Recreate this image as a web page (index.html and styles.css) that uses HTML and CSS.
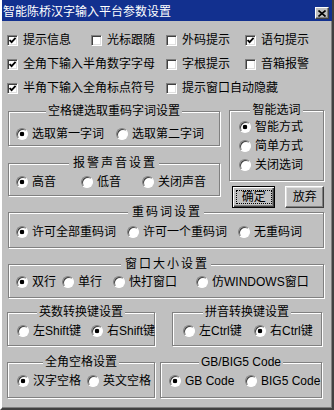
FILE: index.html
```html
<!DOCTYPE html>
<html lang="zh-CN">
<head>
<meta charset="utf-8">
<title>智能陈桥汉字输入平台参数设置</title>
<link rel="stylesheet" href="styles.css">
</head>
<body>
<div class="window">
  <div class="titlebar">
    <span class="title">智能陈桥汉字输入平台参数设置</span>
    <span class="close"><svg width="8" height="7" viewBox="0 0 8 7"><path d="M0.5 0.5 L7.5 6.5 M7.5 0.5 L0.5 6.5" stroke="#000" stroke-width="1.6" fill="none"/></svg></span>
  </div>
  <div class="body">
    <div class="checks">
      <label class="chk"><span class="box"><svg width="7" height="7" viewBox="0 0 7 7"><polyline points="0.6,3 2.6,5.2 6.6,0.8" stroke="#000" stroke-width="1.8" fill="none"/></svg></span>提示信息</label>
      <label class="chk"><span class="box"></span>光标跟随</label>
      <label class="chk"><span class="box"></span>外码提示</label>
      <label class="chk"><span class="box"><svg width="7" height="7" viewBox="0 0 7 7"><polyline points="0.6,3 2.6,5.2 6.6,0.8" stroke="#000" stroke-width="1.8" fill="none"/></svg></span>语句提示</label>
      <label class="chk span2"><span class="box"><svg width="7" height="7" viewBox="0 0 7 7"><polyline points="0.6,3 2.6,5.2 6.6,0.8" stroke="#000" stroke-width="1.8" fill="none"/></svg></span>全角下输入半角数字字母</label>
      <label class="chk"><span class="box"></span>字根提示</label>
      <label class="chk"><span class="box"></span>音箱报警</label>
      <label class="chk span2"><span class="box"><svg width="7" height="7" viewBox="0 0 7 7"><polyline points="0.6,3 2.6,5.2 6.6,0.8" stroke="#000" stroke-width="1.8" fill="none"/></svg></span>半角下输入全角标点符号</label>
      <label class="chk span2"><span class="box"></span>提示窗口自动隐藏</label>
    </div>

    <div class="middle">
      <div class="col-left">
        <div class="group g1">
          <div class="legend">空格键选取重码字词设置</div>
          <div class="opts">
            <label class="rad"><span class="dot on"></span>选取第一字词</label>
            <label class="rad"><span class="dot"></span>选取第二字词</label>
          </div>
        </div>
        <div class="group g2">
          <div class="legend spaced">报警声音设置</div>
          <div class="opts">
            <label class="rad"><span class="dot on"></span>高音</label>
            <label class="rad"><span class="dot"></span>低音</label>
            <label class="rad"><span class="dot"></span>关闭声音</label>
          </div>
        </div>
      </div>
      <div class="col-right">
        <div class="group g3">
          <div class="legend">智能选词</div>
          <div class="opts-col">
            <label class="rad"><span class="dot on"></span>智能方式</label>
            <label class="rad"><span class="dot"></span>简单方式</label>
            <label class="rad"><span class="dot"></span>关闭选词</label>
          </div>
        </div>
        <div class="buttons">
          <button class="btn btn-ok"><span class="focus">确定</span></button>
          <button class="btn btn-cancel">放弃</button>
        </div>
      </div>
    </div>

    <div class="group g4">
      <div class="legend spaced">重码词设置</div>
      <div class="opts">
        <label class="rad"><span class="dot on"></span>许可全部重码词</label>
        <label class="rad"><span class="dot"></span>许可一个重码词</label>
        <label class="rad"><span class="dot"></span>无重码词</label>
      </div>
    </div>

    <div class="group g5">
      <div class="legend spaced">窗口大小设置</div>
      <div class="opts">
        <label class="rad"><span class="dot on"></span>双行</label>
        <label class="rad"><span class="dot"></span>单行</label>
        <label class="rad"><span class="dot"></span>快打窗口</label>
        <label class="rad"><span class="dot"></span>仿WINDOWS窗口</label>
      </div>
    </div>

    <div class="pair pair1">
      <div class="group g6">
        <div class="legend">英数转换键设置</div>
        <div class="opts">
          <label class="rad"><span class="dot"></span>左Shift键</label>
          <label class="rad"><span class="dot on"></span>右Shift键</label>
        </div>
      </div>
      <div class="group g7">
        <div class="legend">拼音转换键设置</div>
        <div class="opts">
          <label class="rad"><span class="dot"></span>左Ctrl键</label>
          <label class="rad"><span class="dot on"></span>右Ctrl键</label>
        </div>
      </div>
    </div>

    <div class="pair pair2">
      <div class="group g8">
        <div class="legend">全角空格设置</div>
        <div class="opts">
          <label class="rad"><span class="dot on"></span>汉字空格</label>
          <label class="rad"><span class="dot"></span>英文空格</label>
        </div>
      </div>
      <div class="group g9">
        <div class="legend">GB/BIG5 Code</div>
        <div class="opts">
          <label class="rad"><span class="dot on"></span>GB Code</label>
          <label class="rad"><span class="dot"></span>BIG5 Code</label>
        </div>
      </div>
    </div>
  </div>
</div>
</body>
</html>
```

FILE: styles.css
```css
html, body {
  margin: 0;
  padding: 0;
  background: #c0c0c0;
}

body {
  font-family: "Liberation Sans", "Noto Sans CJK SC", sans-serif;
  font-size: 12px;
  line-height: 14px;
  color: #000;
}

.window {
  width: 334px;
  height: 410px;
  box-sizing: border-box;
  border-style: solid;
  border-width: 0 2px 2px 2px;
  border-color: #dfdfdf #404040 #404040 #ffffff;
  box-shadow: inset -1px -1px 0 #808080;
  background: #c0c0c0;
  overflow: hidden;
}

/* title bar */
.titlebar {
  height: 21px;
  box-sizing: border-box;
  padding: 2px 3px 0 1px;
  background: #12308f;
  color: #fff;
  display: flex;
  align-items: center;
  justify-content: space-between;
}

.title {
  font-size: 12px;
  line-height: 14px;
  white-space: nowrap;
}

.close {
  width: 14px;
  height: 12px;
  box-sizing: border-box;
  margin-top: 3px;
  background: #c0c0c0;
  border: 1px solid;
  border-color: #fff #404040 #404040 #fff;
  box-shadow: inset -1px -1px 0 #808080;
  display: flex;
  align-items: center;
  justify-content: center;
}

.close svg { display: block; }

/* content */
.body {
  padding-left: 6px;
}

.checks {
  display: grid;
  grid-template-columns: 84px 75px 79px 80px;
  grid-template-rows: 14px 14px 14px;
  row-gap: 10px;
  margin: 12px 0 0 -1px;
}

.chk, .rad {
  display: flex;
  align-items: center;
  white-space: nowrap;
  height: 14px;
}

.chk { gap: 5px; }
.rad { gap: 4px; }

.span2 { grid-column: span 2; }

.box {
  flex: none;
  width: 11px;
  height: 11px;
  box-sizing: border-box;
  background: #fff;
  border: 1px solid;
  border-color: #808080 #fff #fff #808080;
  box-shadow: inset 1px 1px 0 #404040, inset -1px -1px 0 #dfdfdf;
  display: flex;
  align-items: center;
  justify-content: center;
}

.box svg { display: block; }

.dot {
  flex: none;
  width: 12px;
  height: 12px;
  box-sizing: border-box;
  border-radius: 50%;
  border: 1px solid;
  border-color: #808080 #fff #fff #808080;
  box-shadow: inset 1px 1px 0 #404040;
  background: #fff;
}

.dot.on {
  background: radial-gradient(circle at 50% 50%, #000 0, #000 2px, #fff 2.6px);
}

/* group boxes */
.group {
  box-sizing: border-box;
  border: 1px solid #808080;
  box-shadow: inset 1px 1px 0 #fff, 1px 1px 0 #fff;
}

.legend {
  width: fit-content;
  margin: -8px auto 0;
  padding: 0 2px;
  height: 14px;
  line-height: 14px;
  background: #c0c0c0;
  white-space: nowrap;
}

.legend.spaced {
  letter-spacing: 2px;
  padding-left: 4px;
}

.opts {
  display: grid;
  grid-auto-flow: column;
  justify-content: start;
  height: 14px;
}

.opts-col {
  display: flex;
  flex-direction: column;
  gap: 5px;
  margin-top: 3px;
  padding-left: 9px;
}

.middle {
  display: flex;
}

.col-left {
  width: 212px;
  display: flex;
  flex-direction: column;
}

.col-right {
  width: 95px;
  margin-left: 9px;
  display: flex;
  flex-direction: column;
}

.g1 { margin-top: 16px; height: 35px; }
.g1 .opts { margin-top: 9px; padding-left: 7px; grid-template-columns: 100px 100px; }

.g2 { margin-top: 17px; height: 33px; }
.g2 .opts { margin-top: 5px; padding-left: 7px; grid-template-columns: 65px 61px auto; }

.g3 { margin-top: 15px; height: 71px; }

.buttons {
  display: flex;
  gap: 10px;
  margin: 5px 0 0 3px;
}

.btn {
  box-sizing: border-box;
  height: 22px;
  padding: 0;
  margin: 0;
  font: inherit;
  color: #000;
  background: #c0c0c0;
  border: 1px solid;
  border-color: #fff #404040 #404040 #fff;
  box-shadow: inset -1px -1px 0 #808080, inset 1px 1px 0 #dfdfdf;
  display: flex;
  align-items: center;
  justify-content: center;
}

.btn-ok {
  width: 44px;
  border-color: #000;
  box-shadow: inset 1px 1px 0 #fff, inset -1px -1px 0 #404040, inset -2px -2px 0 #808080;
}

.btn-cancel {
  width: 39px;
}

.focus {
  box-sizing: border-box;
  width: 36px;
  height: 14px;
  line-height: 12px;
  border: 1px dotted #000;
  display: flex;
  align-items: center;
  justify-content: center;
}

.g4 { margin-top: 4px; width: 316px; height: 36px; }
.g4 .opts { margin-top: 6px; padding-left: 7px; grid-template-columns: 111px 111px auto; }

.g5 { margin-top: 16px; width: 316px; height: 34px; }
.g5 .opts { margin-top: 4px; padding-left: 7px; grid-template-columns: 46px 51px 83px auto; }

.pair {
  display: flex;
}

.pair1 { margin-top: 14px; }
.pair2 { margin-top: 16px; }

.g6 { margin-left: -1px; width: 148px; height: 34px; }
.g6 .opts { margin-top: 5px; padding-left: 9px; grid-template-columns: 74px auto; }

.g7 { margin-left: 17px; width: 150px; height: 34px; }
.g7 .opts { margin-top: 5px; padding-left: 10px; grid-template-columns: 71px auto; }

.g8 { margin-left: -1px; width: 148px; height: 36px; }
.g8 .opts { margin-top: 5px; padding-left: 9px; grid-template-columns: 70px auto; }

.g9 { margin-left: 5px; width: 162px; height: 36px; }
.g9 .opts { margin-top: 5px; padding-left: 8px; grid-template-columns: 76px auto; }
```
